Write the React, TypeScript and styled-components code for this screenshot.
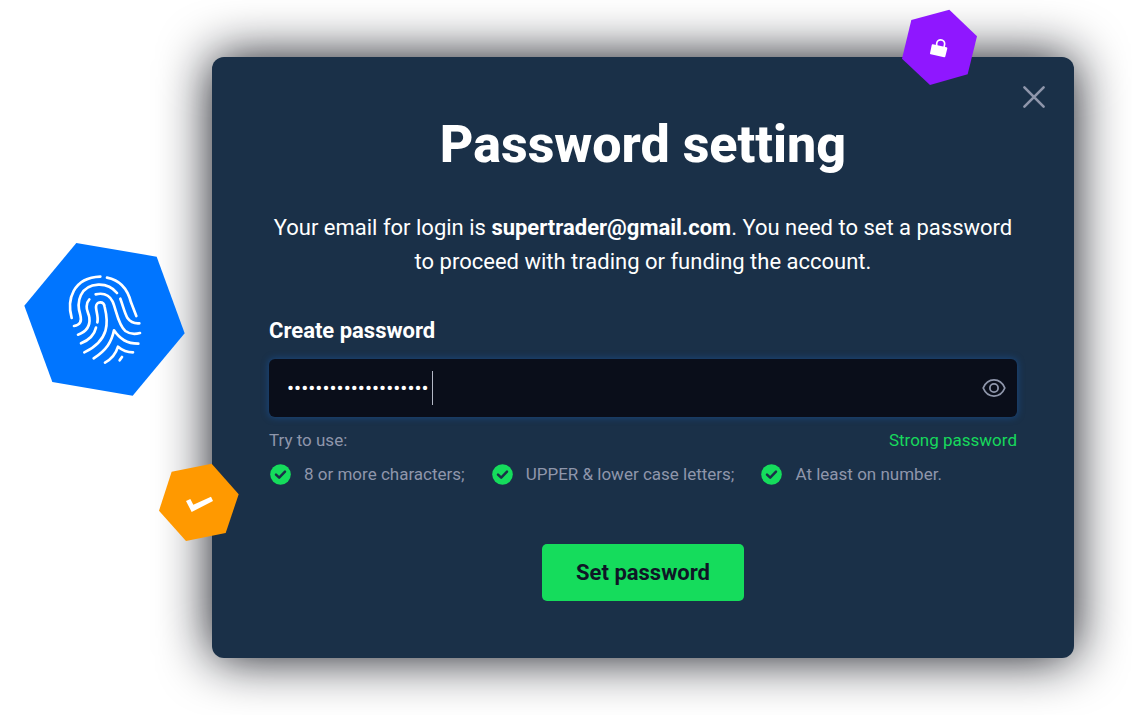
import React, { useState } from "react";
import styled, { createGlobalStyle } from "styled-components";

const GlobalStyle = createGlobalStyle`
  *, *::before, *::after { box-sizing: border-box; }
  body {
    margin: 0;
    background: #fff;
    font-family: Roboto, "Liberation Sans", sans-serif;
    color: #fff;
  }
`;

const Page = styled.main`
  padding: 57px 58px 57px 212px;
`;

const Dialog = styled.section`
  position: relative;
  display: flex;
  flex-direction: column;
  padding: 24px 57px 57px;
  border-radius: 12px;
  background: #1a3048;
  box-shadow: 0 0 52px rgba(6, 8, 18, 0.96);
`;

const Badge = styled.svg<{ $left?: number; $right?: number; $top: number }>`
  position: absolute;
  top: ${(p) => p.$top}px;
  ${(p) => (p.$left !== undefined ? `left: ${p.$left}px;` : "")}
  ${(p) => (p.$right !== undefined ? `right: ${p.$right}px;` : "")}
  pointer-events: none;
`;

const IconButton = styled.button`
  display: flex;
  padding: 0;
  border: 0;
  background: none;
  color: #8f96ab;
  cursor: pointer;
`;

const CloseButton = styled(IconButton)`
  align-self: flex-end;
  padding: 4px;
  margin-right: -33px;
`;

const Title = styled.h1`
  margin: 0;
  font-size: 52px;
  line-height: 64px;
  font-weight: 800;
  text-align: center;
`;

const Intro = styled.p`
  margin: 34px 0 0;
  font-size: 22px;
  line-height: 34px;
  text-align: center;
`;

const Form = styled.form`
  display: flex;
  flex-direction: column;
`;

const Label = styled.label`
  margin: 36px 0 12px;
  font-size: 22px;
  line-height: 32px;
  font-weight: 700;
`;

const Field = styled.div`
  position: relative;
  display: flex;
  align-items: center;
  height: 58px;
  padding: 0 11px 0 18px;
  border-radius: 6px;
  background: #0a0e1a;
  box-shadow: 0 0 6px 1px #19457a;
`;

const Input = styled.input`
  flex: 1;
  min-width: 0;
  padding: 0;
  border: 0;
  outline: 0;
  background: none;
  color: #fff;
  font-family: inherit;
  font-size: 21px;
  line-height: 34px;
  caret-color: transparent;
`;

const Caret = styled.span`
  position: absolute;
  left: 163px;
  top: 12px;
  width: 1px;
  height: 34px;
  background: #b4b8c6;
`;

const HintRow = styled.div`
  display: flex;
  justify-content: space-between;
  margin-top: 10px;
  font-size: 17px;
  line-height: 26px;
  color: #8f96ab;
`;

const Strength = styled.output`
  color: #17d85c;
`;

const Rules = styled.ul`
  display: flex;
  flex-wrap: wrap;
  gap: 0 27px;
  margin: 8px 0 0;
  padding: 0 0 0 1px;
  list-style: none;
`;

const Rule = styled.li`
  display: flex;
  align-items: center;
  gap: 13px;
  font-size: 17px;
  line-height: 26px;
  color: #8f96ab;
`;

const Submit = styled.button`
  align-self: center;
  margin-top: 57px;
  padding: 0 34px;
  height: 57px;
  border: 0;
  border-radius: 5px;
  background: #15dc5c;
  color: #0f1626;
  font-family: inherit;
  font-size: 22px;
  font-weight: 700;
  cursor: pointer;
`;

const FingerprintBadge = () => (
  <Badge $left={-197} $top={173} width="180" height="180" viewBox="0 0 540 540" aria-hidden="true">
    <path fill="#0075ff" d="M184 39 425 80 509 310 353 497 112 456 28 227Z" />
    <g transform="translate(135 105)" fill="none" stroke="#fff" strokeWidth="8" strokeLinecap="round" strokeLinejoin="round">
      <path d="M35 159C20 105 38 38 121 35" />
      <path d="M141 38C180 45 202 70 213 112L229 153" />
      <path d="M42 183C60 180 66 170 61 150C48 110 60 62 115 59C140 58 158 68 171 84" />
      <path d="M54 209C80 200 91 182 88 158C86 143 79 138 80 124C81 112 83 108 88 103" />
      <path d="M107 88C130 83 147 87 158 110C168 132 174 180 196 198C210 208 225 208 240 204" />
      <path d="M181 101C190 125 194 145 203 160C212 173 225 176 238 175" />
      <path d="M63 235C88 225 103 210 108 188" />
      <path d="M112 172C116 155 108 140 108 126C108 108 132 107 134 126C145 170 150 225 73 262" />
      <path d="M101 280C140 255 155 230 162 196C180 222 200 236 235 236" />
      <path d="M135 293C155 282 168 265 174 245C188 257 200 262 219 262" />
      <path d="M179 286L186 276" />
    </g>
  </Badge>
);

const CheckBadge = () => (
  <Badge $left={-62} $top={398} width="100" height="95" viewBox="0 0 300 285" aria-hidden="true">
    <path fill="#ff9900" d="M65 50 185 26 266 118 227 234 108 258 27 167Z" />
    <path fill="#fff" d="M108 138 121 132 130 149 183 125 189 138 125 171Z" />
  </Badge>
);

const LockBadge = () => (
  <Badge $right={84} $top={-57} width="100" height="100" viewBox="0 0 300 300" aria-hidden="true">
    <path fill="#8f17ff" d="M64 60 178 29 261 109 233 223 120 255 36 176Z" />
    <path
      fill="#fff"
      stroke="#fff"
      strokeWidth="6"
      strokeLinejoin="round"
      d="M128 136 169 145 163 169 123 160Z"
    />
    <path fill="none" stroke="#fff" strokeWidth="5" d="M140 138L140 131A12 12 0 0 1 164 132L162 143" />
  </Badge>
);

const RuleCheck = () => (
  <svg width="21" height="21" viewBox="0 0 21 21" aria-hidden="true">
    <circle cx="10.5" cy="10.5" r="10.3" fill="#15dc5c" />
    <path
      d="M6 10.6L9.2 13.7L15 7.7"
      fill="none"
      stroke="#1a3048"
      strokeWidth="2.5"
      strokeLinecap="round"
      strokeLinejoin="round"
    />
  </svg>
);

const rules = ["8 or more characters;", "UPPER & lower case letters;", "At least on number."];

export default function App() {
  const [password, setPassword] = useState("Supertrader2024Login");
  const [visible, setVisible] = useState(false);

  return (
    <>
      <GlobalStyle />
      <Page>
        <Dialog role="dialog" aria-labelledby="title">
          <CloseButton type="button" aria-label="Close">
            <svg width="24" height="24" viewBox="0 0 24 24" fill="none" stroke="currentColor" strokeWidth="2.6" strokeLinecap="round">
              <path d="M2.4 2.4L21.6 21.6M21.6 2.4L2.4 21.6" />
            </svg>
          </CloseButton>
          <Title id="title">Password setting</Title>
          <Intro>
            Your email for login is <strong>supertrader@gmail.com</strong>. You need to set a password
            <br />
            to proceed with trading or funding the account.
          </Intro>
          <Form onSubmit={(e) => e.preventDefault()}>
            <Label htmlFor="password">Create password</Label>
            <Field>
              <Input
                id="password"
                type={visible ? "text" : "password"}
                value={password}
                onChange={(e) => setPassword(e.target.value)}
              />
              <Caret />
              <IconButton type="button" aria-label="Show password" onClick={() => setVisible(!visible)}>
                <svg width="24" height="20" viewBox="0 0 24 20" fill="none" stroke="currentColor" strokeWidth="1.8" strokeLinejoin="round">
                  <path d="M1.2 10C3.3 5 7.2 1.9 12 1.9S20.7 5 22.8 10C20.7 15 16.8 18.1 12 18.1S3.3 15 1.2 10Z" />
                  <circle cx="12" cy="10" r="4.1" />
                </svg>
              </IconButton>
            </Field>
            <HintRow>
              <span>Try to use:</span>
              <Strength htmlFor="password">Strong password</Strength>
            </HintRow>
            <Rules>
              {rules.map((rule) => (
                <Rule key={rule}>
                  <RuleCheck />
                  {rule}
                </Rule>
              ))}
            </Rules>
            <Submit type="submit">Set password</Submit>
          </Form>
          <FingerprintBadge />
          <CheckBadge />
          <LockBadge />
        </Dialog>
      </Page>
    </>
  );
}
